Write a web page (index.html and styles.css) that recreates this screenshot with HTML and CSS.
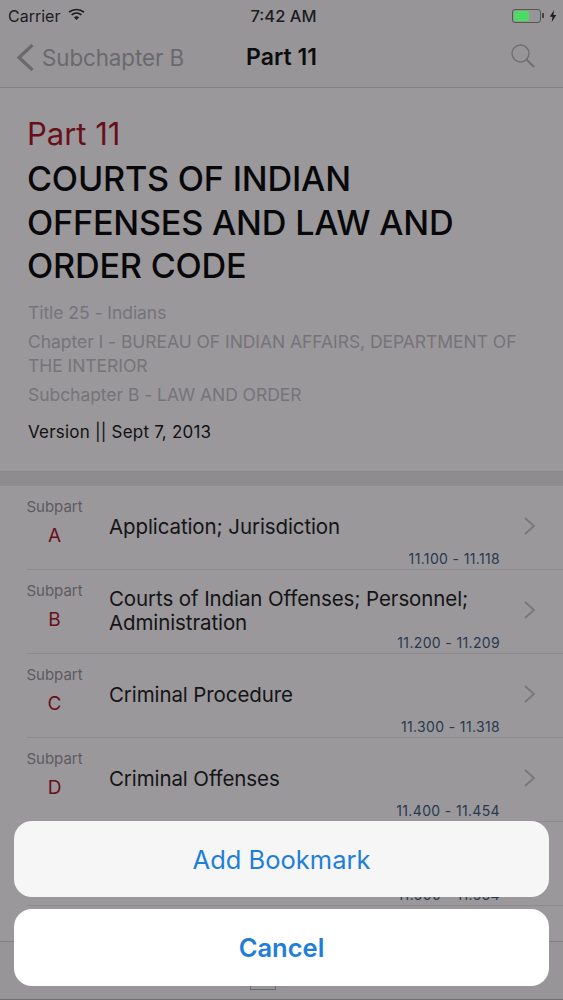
FILE: index.html
```html
<!DOCTYPE html>
<html lang="en">
<head>
<meta charset="utf-8">
<title>Part 11</title>
<link rel="stylesheet" href="styles.css">
</head>
<body>
<div class="screen">
  <div class="status">
    <div class="status-left">
      <span>Carrier</span>
      <svg class="wifi" width="17" height="13" viewBox="0 0 17 13"><path d="M1 4.2C5.3.6 11.700.6 16 4.200" fill="none" stroke="#1c1c1e" stroke-width="1.700"/><path d="M3.600 6.900C6.500 4.500 10.500 4.500 13.400 6.900" fill="none" stroke="#1c1c1e" stroke-width="1.700"/><path d="M5.900 9.200c1.600-1.200 3.600-1.200 5.200 0L8.500 12z" fill="#1c1c1e"/></svg>
    </div>
    <div class="status-time">7:42 AM</div>
    <div class="status-right">
      <div class="battery"><div class="battery-fill"></div></div>
      <div class="battery-tip"></div>
      <svg width="8" height="12" viewBox="0 0 8 12"><path d="M5 0L0.800 6.800H3.500L2.700 12 7.300 4.900H4.400z" fill="#1c1c1e"/></svg>
    </div>
  </div>
  <div class="nav">
    <div class="nav-back">
      <svg width="19" height="29" viewBox="0 0 19 29"><path d="M16.500 2L3 14.500 16.500 27" fill="none" stroke="#6a696c" stroke-width="3.200"/></svg>
      <span>Subchapter B</span>
    </div>
    <div class="nav-title">Part 11</div>
    <svg class="nav-search" width="26" height="26" viewBox="0 0 26 26"><circle cx="10.500" cy="10.500" r="8.500" fill="none" stroke="#6f6e71" stroke-width="1.400"/><path d="M16.500 16.500L24 24" fill="none" stroke="#6f6e71" stroke-width="2"/></svg>
  </div>
  <div class="header">
    <div class="part">Part 11</div>
    <h1 class="title">COURTS OF INDIAN OFFENSES AND LAW AND ORDER CODE</h1>
    <div class="crumb">Title 25 - Indians</div>
    <div class="crumb">Chapter I - BUREAU OF INDIAN AFFAIRS, DEPARTMENT OF THE INTERIOR</div>
    <div class="crumb">Subchapter B - LAW AND ORDER</div>
    <div class="version">Version || Sept 7, 2013</div>
  </div>
  <div class="band"></div>
  <div class="list">
    <div class="row">
      <div class="sub"><span class="sub-label">Subpart</span><span class="sub-letter">A</span></div>
      <div class="row-title">Application; Jurisdiction</div>
      <svg class="chev" width="13" height="20" viewBox="0 0 13 20"><path d="M2 2l9 8-9 8" fill="none" stroke="#777679" stroke-width="1.800"/></svg>
      <div class="range">11.100 - 11.118</div>
    </div>
    <div class="row two-line">
      <div class="sub"><span class="sub-label">Subpart</span><span class="sub-letter">B</span></div>
      <div class="row-title">Courts of Indian Offenses; Personnel; Administration</div>
      <svg class="chev" width="13" height="20" viewBox="0 0 13 20"><path d="M2 2l9 8-9 8" fill="none" stroke="#777679" stroke-width="1.800"/></svg>
      <div class="range">11.200 - 11.209</div>
    </div>
    <div class="row">
      <div class="sub"><span class="sub-label">Subpart</span><span class="sub-letter">C</span></div>
      <div class="row-title">Criminal Procedure</div>
      <svg class="chev" width="13" height="20" viewBox="0 0 13 20"><path d="M2 2l9 8-9 8" fill="none" stroke="#777679" stroke-width="1.800"/></svg>
      <div class="range">11.300 - 11.318</div>
    </div>
    <div class="row">
      <div class="sub"><span class="sub-label">Subpart</span><span class="sub-letter">D</span></div>
      <div class="row-title">Criminal Offenses</div>
      <svg class="chev" width="13" height="20" viewBox="0 0 13 20"><path d="M2 2l9 8-9 8" fill="none" stroke="#777679" stroke-width="1.800"/></svg>
      <div class="range">11.400 - 11.454</div>
    </div>
    <div class="row">
      <div class="range">11.500 - 11.564</div>
    </div>
  </div>
  <div class="tabbar"><div class="tab-icon"></div></div>
  <div class="sheet">
    <div class="sheet-btn add">Add Bookmark</div>
    <div class="sheet-btn cancel">Cancel</div>
  </div>
</div>
</body>
</html>
```
FILE: styles.css
```css
* { box-sizing: border-box; }
html, body { margin: 0; padding: 0; }
body { font-family: Inter, "Liberation Sans", sans-serif; }
.screen { position: relative; width: 563px; height: 1000px; overflow: hidden; background: #9a989b; color: #111; }
.status { height: 29px; display: flex; align-items: center; justify-content: space-between; padding: 2px 6px 0 8px; background: #979598; font-size: 16px; position: relative; color: #1c1c1e; }
.status-left { display: flex; align-items: center; gap: 8px; }
.status-time { position: absolute; left: 0; right: 0; padding-left: 4px; text-align: center; font-weight: 500; font-size: 16.500px; }
.status-right { display: flex; align-items: center; }
.wifi { margin-top: -3px; }
.battery { width: 29px; height: 14px; border: 1px solid #555; border-radius: 3px; padding: 1px; }
.battery-fill { width: 15px; height: 100%; background: #4cd964; border-radius: 1px; }
.battery-tip { width: 2px; height: 5px; background: #444; margin: 0 5px 0 1px; }
.nav { height: 59px; display: flex; align-items: center; position: relative; background: #979598; border-bottom: 1px solid #828084; padding: 0 0 2px 16px; }
.nav-back { display: flex; align-items: center; gap: 7px; color: #6a696c; font-size: 22.400px; letter-spacing: -0.100px; }
.nav-title { position: absolute; left: 0; right: 0; text-align: center; font-size: 23px; font-weight: 600; color: #0c0c0d; }
.nav-search { position: absolute; right: 27px; top: 14px; }
.header { height: 383px; padding: 28px 28px 0; }
.part { font-size: 31px; line-height: 36px; color: #681019; margin-left: -1px; }
.title { margin: 5px 0 13px -1px; max-width: 440px; font-size: 34.200px; line-height: 43.500px; font-weight: 500; color: #08080a; letter-spacing: -0.200px; }
.crumb { font-size: 17.500px; line-height: 24px; color: #757478; margin-bottom: 5px; letter-spacing: -0.050px; }
.version { font-size: 17px; line-height: 24px; margin-top: 13px; color: #111; letter-spacing: 0.200px; }
.band { height: 15px; background: #8e8c8f; border-top: 1px solid #8a888c; }
.list { padding-left: 27px; }
.row { position: relative; height: 84px; display: flex; border-bottom: 1px solid #8c8a8e; }
.sub { width: 55px; margin-right: 27px; display: flex; flex-direction: column; align-items: center; padding-top: 11px; flex: none; }
.sub-label { font-size: 15px; line-height: 19px; color: #5c5b5f; }
.sub-letter { font-size: 19px; line-height: 24px; margin-top: 8px; color: #681019; }
.row-title { width: 385px; padding-top: 29px; font-size: 20.500px; line-height: 24px; color: #141416; letter-spacing: -0.100px; }
.two-line .row-title { padding-top: 17px; }
.chev { position: absolute; right: 27px; top: 30px; }
.range { position: absolute; right: 63px; bottom: 1px; font-size: 14px; line-height: 18px; letter-spacing: 0.350px; color: #27384f; }
.tabbar { position: absolute; left: 0; right: 0; top: 941px; height: 59px; border-top: 1px solid #828084; background: #979598; border-bottom: 1px solid #6f6e71; }
.tab-icon { position: absolute; left: 250px; top: 40px; width: 26px; height: 8px; border: 1px solid #6a696c; border-top: 0; }
.sheet { position: absolute; left: 14px; right: 14px; top: 821px; display: flex; flex-direction: column; gap: 12px; }
.sheet-btn { height: 77px; border-radius: 18px; display: flex; align-items: center; justify-content: center; color: #1f7fd8; font-size: 25.500px; }
.add { height: 76px; background: #f6f6f7; }
.cancel { background: #fff; font-weight: 600; }
```
